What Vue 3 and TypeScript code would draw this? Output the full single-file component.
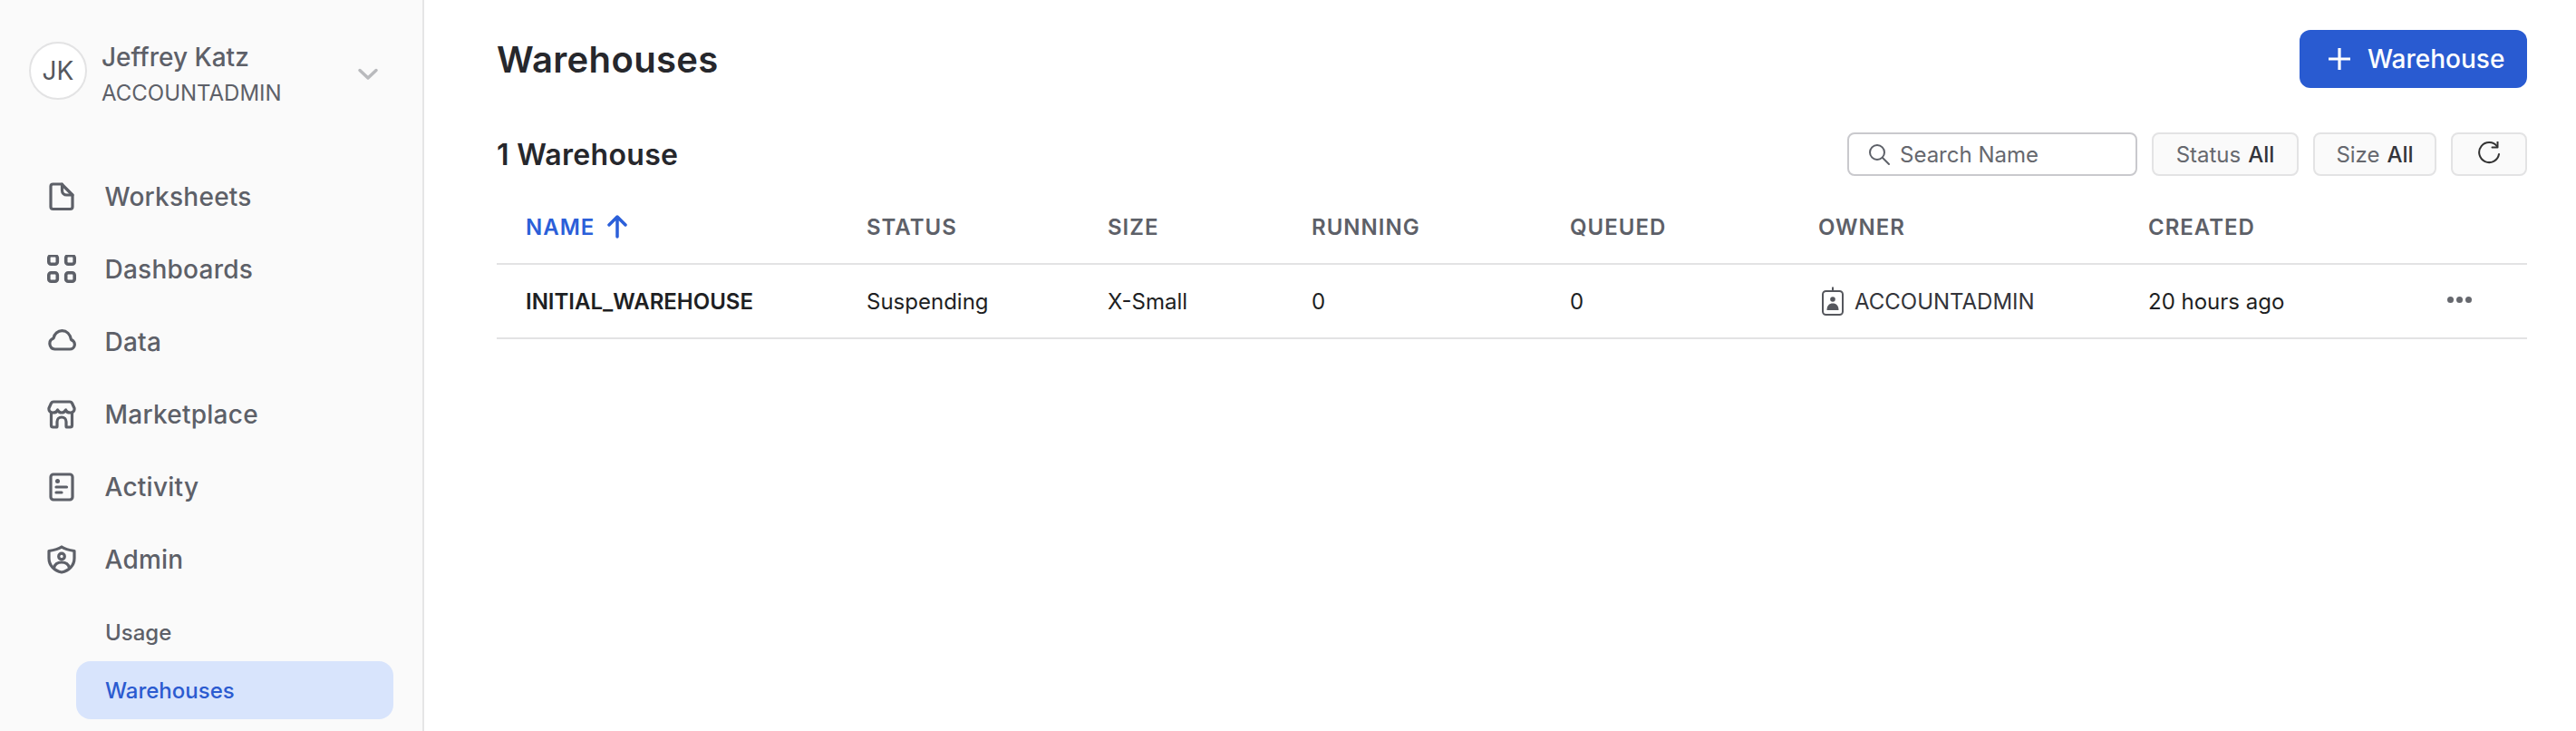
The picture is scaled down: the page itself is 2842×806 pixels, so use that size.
<template>
  <div class="app">
    <aside class="sidebar">
      <div class="user">
        <div class="avatar">JK</div>
        <div class="user-text">
          <div class="user-name">Jeffrey Katz</div>
          <div class="user-role">ACCOUNTADMIN</div>
        </div>
        <svg class="chevron" width="24" height="24" viewBox="0 0 24 24" fill="none" stroke="#b9babd" stroke-width="3.500" stroke-linecap="round" stroke-linejoin="round">
          <path d="M3 7.500l9 8.500 9-8.500" />
        </svg>
      </div>

      <nav class="nav">
        <a v-for="item in navItems" :key="item.label" class="nav-item">
          <svg class="nav-icon" width="32" height="32" viewBox="0 0 32 32" fill="none" stroke="#5d6068" stroke-width="3.200" stroke-linecap="round" stroke-linejoin="round">
            <template v-if="item.icon === 'file'">
              <path d="M6.500 2h9.500L28 14v13a2.500 2.500 0 0 1-2.500 2.500h-19A2.500 2.500 0 0 1 4 27V4.500A2.500 2.500 0 0 1 6.500 2z" />
              <path d="M16.500 2v7a5 5 0 0 0 5 5H28" />
            </template>
            <template v-else-if="item.icon === 'grid'">
              <g stroke-width="3.600">
                <rect x="1.800" y="0.800" width="9.500" height="9.500" rx="2.500" />
                <rect x="20.700" y="0.800" width="9.500" height="9.500" rx="2.500" />
                <rect x="1.800" y="19.800" width="9.500" height="9.500" rx="2.500" />
                <rect x="20.700" y="19.800" width="9.500" height="9.500" rx="2.500" />
              </g>
            </template>
            <template v-else-if="item.icon === 'cloud'">
              <path d="M8.500 24h16.500a5.300 5.300 0 0 0 1.500-10.400C25.500 7.500 21.500 3.700 16.500 3.700c-4.700 0-8.700 3.300-9.500 8.300A6.200 6.200 0 0 0 8.500 24z" />
            </template>
            <template v-else-if="item.icon === 'store'">
              <path d="M7 2h18a3 3 0 0 1 2.500 1.500L30 9c.5 3-1.500 5-4.500 5-2.500 0-4.500-1-5-3-1 2-2.500 3-4.500 3s-3.500-1-4.500-3c-.5 2-2.500 3-5 3C3.500 14 1.500 12 2 9l2.500-5.500A3 3 0 0 1 7 2z" />
              <path d="M4.500 14v14a2 2 0 0 0 2 2h3.500a1 1 0 0 0 1-1v-5a5 5 0 0 1 10 0v5a1 1 0 0 0 1 1h3.500a2 2 0 0 0 2-2V14" />
            </template>
            <template v-else-if="item.icon === 'activity'">
              <rect x="4" y="2" width="24" height="28" rx="3" />
              <circle cx="11.500" cy="9.500" r="2.500" fill="#5d6068" stroke="none" />
              <path d="M10 16h11.500M10 22h6" />
            </template>
            <template v-else>
              <path d="M16 2c3 2 8 3.500 14 4.500v8c0 8-6 14-14 15.500C8 28.500 2 22.500 2 14.500v-8C8 5.500 13 4 16 2z" />
              <circle cx="16" cy="12.500" r="3.300" />
              <path d="M7.500 25c1-4 4-6 8.500-6s7.500 2 8.500 6" />
            </template>
          </svg>
          <span>{{ item.label }}</span>
        </a>
        <a class="sub-item first">Usage</a>
        <a class="sub-item active">Warehouses</a>
      </nav>
    </aside>

    <main class="main">
      <header class="page-head">
        <h1>Warehouses</h1>
        <button class="add-btn">
          <svg width="28" height="28" viewBox="0 0 28 28" fill="none" stroke="#fff" stroke-width="3.200" stroke-linecap="butt">
            <path d="M14 2v24M2 14h24" />
          </svg>
          <span>Warehouse</span>
        </button>
      </header>

      <div class="toolbar">
        <h2>{{ rows.length }} Warehouse</h2>
        <div class="filters">
          <label class="search">
            <svg width="26" height="26" viewBox="0 0 26 26" fill="none" stroke="#5d6068" stroke-width="2" stroke-linecap="round">
              <circle cx="11" cy="11" r="8" />
              <path d="M17 17l7 7" />
            </svg>
            <input type="text" placeholder="Search Name" />
          </label>
          <button class="filter status"><span>Status</span> <b>All</b></button>
          <button class="filter size"><span>Size</span> <b>All</b></button>
          <button class="filter refresh" aria-label="Refresh">
            <svg width="28" height="28" viewBox="0 0 28 28" fill="none" stroke="#333" stroke-width="2" stroke-linecap="round" stroke-linejoin="round">
              <path d="M23 5.500A11 11 0 1 0 25 14" />
              <path d="M23.500 0.500v6h-6" />
            </svg>
          </button>
        </div>
      </div>

      <div class="table">
        <div class="tr thead">
          <div class="sorted">
            NAME
            <svg width="24" height="28" viewBox="0 0 24 28" fill="none" stroke="#2b5fd9" stroke-width="3.500" stroke-linecap="round" stroke-linejoin="round">
              <path d="M12 25V3M3 12l9-9 9 9" />
            </svg>
          </div>
          <div>STATUS</div>
          <div>SIZE</div>
          <div>RUNNING</div>
          <div>QUEUED</div>
          <div>OWNER</div>
          <div>CREATED</div>
          <div></div>
        </div>
        <div v-for="row in rows" :key="row.name" class="tr tbody">
          <div class="name">{{ row.name }}</div>
          <div>{{ row.status }}</div>
          <div>{{ row.size }}</div>
          <div>{{ row.running }}</div>
          <div>{{ row.queued }}</div>
          <div class="owner">
            <svg width="26" height="32" viewBox="0 0 26 32" fill="none" stroke="#55575d" stroke-width="2" stroke-linejoin="round">
              <rect x="2" y="5" width="22" height="26" rx="3.500" />
              <path d="M13 0.500V5" />
              <circle cx="13" cy="14" r="2.800" fill="#55575d" stroke="none" />
              <path d="M6.500 26c0-5 2.500-7.500 6.500-7.500s6.500 2.500 6.500 7.500z" fill="#55575d" stroke="none" />
            </svg>
            <span>{{ row.owner }}</span>
          </div>
          <div>{{ row.created }}</div>
          <div class="more">
            <i></i><i></i><i></i>
          </div>
        </div>
      </div>
    </main>
  </div>
</template>

<script setup lang="ts">
interface NavItem {
  label: string
  icon: string
}

interface WarehouseRow {
  name: string
  status: string
  size: string
  running: number
  queued: number
  owner: string
  created: string
}

const navItems: NavItem[] = [
  { label: 'Worksheets', icon: 'file' },
  { label: 'Dashboards', icon: 'grid' },
  { label: 'Data', icon: 'cloud' },
  { label: 'Marketplace', icon: 'store' },
  { label: 'Activity', icon: 'activity' },
  { label: 'Admin', icon: 'admin' },
]

const rows: WarehouseRow[] = [
  {
    name: 'INITIAL_WAREHOUSE',
    status: 'Suspending',
    size: 'X-Small',
    running: 0,
    queued: 0,
    owner: 'ACCOUNTADMIN',
    created: '20 hours ago',
  },
]
</script>

<style>
html,
body {
  margin: 0;
  background: #fff;
  overflow: hidden;
}
</style>

<style scoped>
.app {
  display: flex;
  height: 806px;
  font-family: Inter, "Liberation Sans", sans-serif;
  color: #1e1f23;
  overflow: hidden;
}

.sidebar {
  flex: 0 0 468px;
  box-sizing: border-box;
  background: #fafafa;
  border-right: 2px solid #e5e5e6;
  padding: 46px 32px 0;
}

.user {
  display: flex;
  align-items: center;
  height: 64px;
}

.avatar {
  flex: none;
  width: 64px;
  height: 64px;
  box-sizing: border-box;
  display: flex;
  align-items: center;
  justify-content: center;
  border: 2px solid #e3e3e4;
  border-radius: 50%;
  background: #fff;
  color: #55575d;
  font-size: 28px;
}

.user-text {
  margin: 10px 0 0 16px;
  width: 282px;
  color: #5d6068;
}

.user-name {
  font-size: 28px;
  font-weight: 500;
  line-height: 39px;
}

.user-role {
  font-size: 24px;
  line-height: 39px;
}

.chevron {
  margin-top: 8px;
}

.nav {
  margin-top: 67px;
  display: flex;
  flex-direction: column;
}

.nav-item {
  display: flex;
  align-items: center;
  height: 80px;
  padding-left: 20px;
  color: #5d6068;
  font-size: 28px;
  font-weight: 500;
  letter-spacing: 0.25px;
}

.nav-icon {
  margin-right: 31.500px;
}

.sub-item {
  display: flex;
  align-items: center;
  height: 64px;
  margin-left: 52px;
  width: 350px;
  box-sizing: border-box;
  padding-left: 32px;
  color: #5d6068;
  font-size: 24px;
  font-weight: 500;
  border-radius: 16px;
}

.sub-item.first {
  margin-top: 8px;
}

.sub-item.active {
  background: #d8e4fc;
  color: #2b5bd0;
}

.main {
  flex: 1;
  min-width: 0;
  padding: 33px 54px 0 80px;
}

.page-head {
  display: flex;
  align-items: center;
  justify-content: space-between;
  height: 64px;
}

h1 {
  margin: 0;
  font-size: 40px;
  font-weight: 600;
  letter-spacing: 0.35px;
  color: #26272c;
}

.add-btn {
  display: flex;
  align-items: center;
  gap: 17px;
  width: 251px;
  height: 64px;
  padding: 0 0 0 30px;
  border: none;
  border-radius: 12px;
  background: #295bd1;
  color: #fff;
  font-family: inherit;
  font-size: 28px;
  font-weight: 500;
}

.toolbar {
  display: flex;
  align-items: center;
  justify-content: space-between;
  margin-top: 49px;
  height: 48px;
}

h2 {
  margin: 0;
  font-size: 32px;
  font-weight: 600;
  letter-spacing: 0.3px;
  color: #26272c;
}

.filters {
  display: flex;
  align-items: center;
  gap: 16px;
}

.search {
  display: flex;
  align-items: center;
  gap: 10px;
  width: 320px;
  height: 48px;
  box-sizing: border-box;
  padding-left: 20px;
  border: 2px solid #c9c9cd;
  border-radius: 8px;
  background: #fff;
}

.search input {
  flex: 1;
  min-width: 0;
  border: none;
  outline: none;
  padding: 0;
  background: transparent;
  font-family: inherit;
  font-size: 24px;
  color: #1e1f23;
}

.search input::placeholder {
  color: #66686e;
  opacity: 1;
}

.filter {
  display: flex;
  align-items: center;
  justify-content: center;
  gap: 8px;
  height: 48px;
  box-sizing: border-box;
  padding: 0;
  border: 2px solid #e3e3e4;
  border-radius: 8px;
  background: #fafafa;
  font-family: inherit;
  font-size: 24px;
  color: #66686e;
}

.filter b {
  font-weight: 500;
  color: #33343a;
}

.status {
  width: 162px;
}

.size {
  width: 136px;
}

.refresh {
  width: 84px;
}

.table {
  margin-top: 16px;
}

.tr {
  display: grid;
  grid-template-columns: 376px 266px 225px 285px 274px 364px 315px 103px;
  padding-left: 32px;
  align-items: center;
  border-bottom: 2px solid #e3e3e4;
}

.thead {
  height: 80px;
  font-size: 24px;
  font-weight: 600;
  letter-spacing: 1px;
  color: #5d6068;
}

.sorted {
  display: flex;
  align-items: center;
  gap: 13px;
  color: #2b5fd9;
}

.tbody {
  height: 80px;
  font-size: 24px;
  color: #1e1f23;
}

.name {
  font-weight: 600;
}

.owner {
  display: flex;
  align-items: center;
  gap: 11px;
  margin-left: 3px;
  color: #33343a;
}

.more {
  display: flex;
  gap: 3px;
  margin: -4px 0 0 15px;
}

.more i {
  width: 7px;
  height: 7px;
  border-radius: 50%;
  background: #66686e;
}

a {
  text-decoration: none;
}
</style>
